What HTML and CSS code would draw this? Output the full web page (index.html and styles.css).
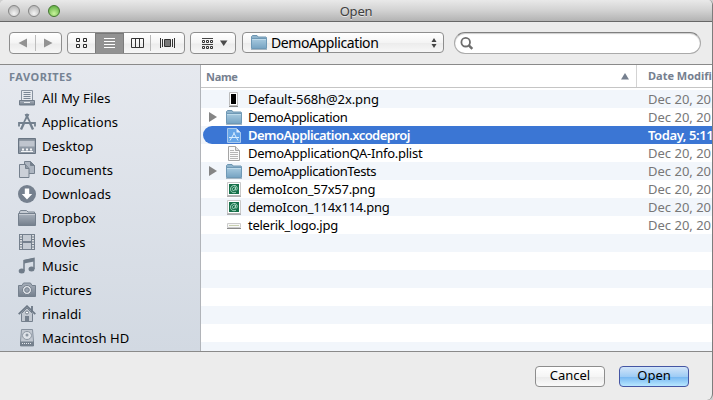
FILE: index.html
```html
<!DOCTYPE html>
<html lang="en">
<head>
<meta charset="utf-8">
<title>Open</title>
<link rel="stylesheet" href="styles.css">
</head>
<body>
<svg width="0" height="0" class="defs">
  <defs>
    <linearGradient id="steel" x1="0" y1="0" x2="0" y2="1"><stop offset="0" stop-color="#a9b1bc"/><stop offset="1" stop-color="#747f8c"/></linearGradient>
    <linearGradient id="blue" x1="0" y1="0" x2="0" y2="1"><stop offset="0" stop-color="#a9cbe0"/><stop offset="1" stop-color="#76a3c2"/></linearGradient>
    <symbol id="folder" viewBox="0 0 16 15">
      <path d="M.5 4V1.500L1.500.500h4.500l1 1.500h8l.5.500V4" fill="#8fb4cc" stroke="#6e96b2"/>
      <path d="M.5 3.500h15v10H.5z" fill="url(#blue)" stroke="#6f99b6"/>
      <path d="M1 4.500h14" stroke="#bedaea"/>
      <path d="M0 14.500h16" stroke="#58778c" opacity=".5"/>
    </symbol>
    <symbol id="demo" viewBox="0 0 14 15">
      <path d="M.5.500h13v13H.5z" fill="#fff" stroke="#c9c9c9"/>
      <path d="M2 2h10v10H2z" fill="#17704a"/>
      <path d="M8.700 5.200C7 4.400 5.200 6 5.300 7.500c.1 1.700 2.500 1.300 3-.5l.4-1.800c-.6 2-.5 3.300.5 3 1.500-.6 1.400-4-1-4.700C5.500 2.900 3.300 5 3.500 7.500c.2 2.600 3 4 5.500 2.700" fill="none" stroke="#b9e3cf" stroke-width=".9"/>
      <path d="M0 14.200h14" stroke="#8c8c8c"/>
    </symbol>
  </defs>
</svg>
<div class="window">
  <header class="titlebar">
    <div class="lights"><i></i><i></i><i class="green"></i></div>
    <h1>Open</h1>
  </header>
  <div class="toolbar">
    <div class="btn nav">
      <svg width="53" height="22" viewBox="0 0 53 22"><path d="M18 6.500v9L9.500 11zM35 6.500v9L43.500 11z" fill="#929292"/><path d="M26.500 3v16" stroke="#bdbdbd"/></svg>
    </div>
    <div class="btn views">
      <svg width="118" height="22" viewBox="0 0 118 22">
        <path d="M28 0h29v22H28z" fill="#929292"/><path d="M28.500 0v22M56.500 0v22" stroke="#7b7b7b"/>
        <path d="M29 1h27" stroke="#787878" stroke-width="2"/>
        <path d="M9.500 6.500h3v3h-3zM16.500 6.500h3v3h-3zM9.500 12.500h3v3h-3zM16.500 12.500h3v3h-3z" fill="none" stroke="#292929"/>
        <path d="M37 6.500h11M37 9.500h11M37 12.500h11M37 15.500h11" stroke="#fff"/>
        <path d="M64.500 6.500h12v9h-12zM68.500 6v10M72.500 6v10" fill="none" stroke="#333"/>
        <path d="M83.500 3v16" stroke="#b8b8b8"/>
        <path d="M93.500 6v10M95.500 7v8M105.500 7v8M107.500 6v10" stroke="#333"/><path d="M97.500 7.500h6v7h-6z" fill="#777" stroke="#333"/>
      </svg>
    </div>
    <div class="btn arrange">
      <svg width="46" height="22" viewBox="0 0 46 22"><path d="M12 6.500h11M12 12.500h11" stroke="#444"/><path d="M12.500 8.500h2v2h-2zM16.500 8.500h2v2h-2zM20.500 8.500h2v2h-2zM12.500 14.500h2v2h-2zM16.500 14.500h2v2h-2zM20.500 14.500h2v2h-2z" fill="none" stroke="#333"/><path d="M30 8.500h7.500L33.700 14z" fill="#4b4b4b"/></svg>
    </div>
    <div class="btn path">
      <svg width="16" height="15"><use href="#folder"/></svg>
      <span>DemoApplication</span>
      <svg class="stepper" width="6" height="10" viewBox="0 0 6 10"><path d="M.5 4L3 0l2.500 4zM.5 6L3 10l2.500-4z" fill="#444"/></svg>
    </div>
    <div class="search"><svg width="14" height="14" viewBox="0 0 14 14"><circle cx="5.700" cy="5.200" r="4.300" fill="none" stroke="#6d6d6d" stroke-width="1.800"/><path d="M8.600 8.200l3.700 3.700" stroke="#6d6d6d" stroke-width="2.400"/></svg></div>
  </div>
  <main class="content">
    <aside class="sidebar">
      <h2>FAVORITES</h2>
      <ul>
        <li><svg viewBox="0 0 18 18"><path d="M3.500 12V1.500h11V12" fill="#e6e9ee" stroke="#8993a0"/><path d="M5.500 3.500h7M5.500 5.500h7M5.500 7.500h7M5.500 9.500h7" stroke="#7a8694"/><path d="M1.500 11.500h15v4.500h-15z" fill="url(#steel)" stroke="#717c89"/><path d="M6 13.500h6" stroke="#e8ebef"/></svg><span>All My Files</span></li>
        <li><svg viewBox="0 0 18 18"><path d="M10.300 1L3 16.500M7.700 1L15 16.500" stroke="#73808e" stroke-width="2.400"/><path d="M1 13.500V10h16v3.500" fill="none" stroke="#73808e" stroke-width="1.800"/><path d="M9 5.500l-2 3.500h4z" fill="#e5e8ed"/></svg><span>Applications</span></li>
        <li><svg viewBox="0 0 18 18"><path d="M.5 1.500h17v15H.5z" fill="#8f99a5" stroke="#697583"/><path d="M1.500 3.500h15v6h-15z" fill="#bfc5ce"/><path d="M1 3h16" stroke="#78838f"/><path d="M3 14.500h12" stroke="#f3f5f7"/><path d="M4 12.500h2M8 12.500h2M12 12.500h2" stroke="#f3f5f7" stroke-width="2"/></svg><span>Desktop</span></li>
        <li><svg viewBox="0 0 18 18"><path d="M6.500.500h6l4 4v8h-10z" fill="#aeb6c1" stroke="#75808d"/><path d="M12.500.500v4h4" fill="#737f8c" stroke="#75808d"/><path d="M1.500 3.500h6l3.500 4v9H1.500z" fill="#cbd0d8" stroke="#75808d"/><path d="M7.500 3.500v4H11" fill="#909aa6" stroke="#75808d"/></svg><span>Documents</span></li>
        <li><svg viewBox="0 0 18 18"><circle cx="9" cy="9" r="9" fill="#75808e"/><path d="M6.800 3.500h4.400V9h3L9 14.500 3.800 9h3z" fill="#fff"/></svg><span>Downloads</span></li>
        <li><svg viewBox="0 0 18 18"><path d="M1.500 5V3l1-1.500h6L10 3h6.500v2" fill="#c5cbd3" stroke="#7a8592"/><path d="M.5 4.500h17v12H.5z" fill="url(#steel)" stroke="#75808d"/><path d="M1 5.500h16" stroke="#c7ccd4"/></svg><span>Dropbox</span></li>
        <li><svg viewBox="0 0 18 18"><path d="M1 1h16v16H1z" fill="#75808d"/><path d="M5 2h8v6H5zM5 10h8v6H5z" fill="#c5cbd3"/><path d="M3 2v15M15 2v15" stroke="#fff" stroke-width="1.500" stroke-dasharray="1.500 1"/></svg><span>Movies</span></li>
        <li><svg viewBox="0 0 18 18"><path d="M6 14V3.500l10-2V12" fill="none" stroke="#707c89" stroke-width="1.500"/><path d="M6 3l10-2v3.500L6 6.500z" fill="#707c89"/><ellipse cx="3.700" cy="14" rx="3" ry="2.500" fill="#707c89"/><ellipse cx="13.500" cy="12" rx="3" ry="2.500" fill="#707c89"/></svg><span>Music</span></li>
        <li><svg viewBox="0 0 18 18"><path d="M.5 4.500H4l1.500-2.500h7L14 4.500h3.500v11H.5z" fill="url(#steel)" stroke="#75808d"/><circle cx="9" cy="9" r="4.500" fill="#e4e7ec" stroke="#75808d"/><circle cx="9" cy="9" r="2.300" fill="#9ba4b0" stroke="#75808d"/></svg><span>Pictures</span></li>
        <li><svg viewBox="0 0 18 18"><path d="M13 1h2v6h-2z" fill="#75808d"/><path d="M3.500 8.500L9 3l5.500 5.500V16.500h-11z" fill="#c3c9d1" stroke="#75808d"/><path d="M.7 9.200L9 1.200l8.300 8" fill="none" stroke="#6c7885" stroke-width="1.800"/><path d="M7 11h4v6H7z" fill="#75808d"/><circle cx="9" cy="7.500" r="1.500" fill="#fff" stroke="#75808d"/></svg><span>rinaldi</span></li>
        <li><svg viewBox="0 0 18 18"><path d="M2.500 12L3.500.500h11l1 11.500v5h-13z" fill="#c1c7d0" stroke="#87919e"/><ellipse cx="9" cy="6.500" rx="4.500" ry="4" fill="#dfe3e9" stroke="#8d97a3"/><circle cx="9" cy="6" r="1.500" fill="#8d97a3"/><path d="M2 12.500h14v4.500H2z" fill="#75808d"/><path d="M4 14.500h10" stroke="#e5e8ed" stroke-dasharray="1 1"/></svg><span>Macintosh HD</span></li>
      </ul>
    </aside>
    <section class="files">
      <div class="head"><b class="name">Name</b><svg width="8" height="7" viewBox="0 0 8 7"><path d="M0 6.500L4 0l4 6.500z" fill="#76808f"/></svg><b class="date">Date Modifi</b></div>
      <div class="rows">
        <div class="row"><i></i><svg viewBox="0 0 16 15"><path d="M3.500.500h8v13h-8z" fill="#fff" stroke="#bbb"/><path d="M5 2h5v10H5z" fill="#000"/><path d="M3 14.500h9" stroke="#888"/></svg><span class="n wide">Default-568h@2x.png</span><span class="d">Dec 20, 20</span></div>
        <div class="row"><i class="tri"></i><svg><use href="#folder"/></svg><span class="n tight">DemoApplication</span><span class="d">Dec 20, 20</span></div>
        <div class="row selected"><i></i><svg viewBox="0 0 16 15"><path d="M1.500.500h9l4 4v10h-13z" fill="#66a5e8" stroke="#a9c9ed"/><path d="M10.500.500v4h4z" fill="#e3f0ff"/><path d="M8.500 4.500l-4.500 8M7.500 4.500l4.500 8M3 9.500h10" stroke="#d9edff" stroke-width="1"/></svg><span class="n">DemoApplication.xcodeproj</span><span class="d">Today, 5:11</span></div>
        <div class="row"><i></i><svg viewBox="0 0 16 15"><path d="M2.500.500h7l4 4v10h-11z" fill="#fafafa" stroke="#a5a5a5"/><path d="M9.500.500v4h4" fill="#ddd" stroke="#a5a5a5"/><path d="M4 4.500h4M4 6.500h8M4 8.500h8M4 10.500h8M4 12.500h8" stroke="#b5b5b5"/></svg><span class="n">DemoApplicationQA-Info.plist</span><span class="d">Dec 20, 20</span></div>
        <div class="row"><i class="tri"></i><svg><use href="#folder"/></svg><span class="n tight">DemoApplicationTests</span><span class="d">Dec 20, 20</span></div>
        <div class="row"><i></i><svg><use href="#demo"/></svg><span class="n">demoIcon_57x57.png</span><span class="d">Dec 20, 20</span></div>
        <div class="row"><i></i><svg><use href="#demo"/></svg><span class="n">demoIcon_114x114.png</span><span class="d">Dec 20, 20</span></div>
        <div class="row"><i></i><svg viewBox="0 0 16 15"><path d="M1.500 5.500h13v4h-13z" fill="#f8f8f8" stroke="#ccc"/><path d="M3 7.500h10" stroke="#c8cfb0"/><path d="M1 10.500h14" stroke="#8a8a8a"/></svg><span class="n">telerik_logo.jpg</span><span class="d">Dec 20, 20</span></div>
      </div>
    </section>
  </main>
  <footer class="footer"><button>Cancel</button><button class="primary">Open</button></footer>
</div>
</body>
</html>
```
FILE: styles.css
```css
* { box-sizing: border-box; }
body { margin: 0; background: #cfcfcf; font: 13px "Noto Sans", sans-serif; color: #000; }
.defs { position: absolute; }
svg { display: block; flex: none; }
.window { width: 713px; height: 400px; display: flex; flex-direction: column; background: #ececec; border-right: 1px solid #7d7d7d; border-radius: 5px 5px 6px 0; overflow: hidden; }
.titlebar { height: 22px; flex: none; display: flex; align-items: center; background: linear-gradient(#e9e9e9, #d2d2d2 50%, #b3b3b3); border-bottom: 1px solid #686868; }
.lights { width: 68px; padding-left: 8px; display: flex; gap: 8px; }
.lights i { width: 12px; height: 12px; border-radius: 50%; border: 1px solid #858585; background: radial-gradient(circle at 50% 75%, #f5f5f5, #bcbcbc 75%); }
.lights .green { border-color: #42762e; background: radial-gradient(circle at 50% 75%, #c9f49c, #6db84d 75%); }
h1 { margin: 0 68px 0 0; flex: 1; text-align: center; font-size: 13px; font-weight: 400; line-height: 20px; letter-spacing: -.2px; color: #404040; text-shadow: 0 1px #e5e5e5; }
.toolbar { height: 43px; flex: none; display: flex; align-items: flex-start; padding: 10px 11px 0 9px; border-bottom: 1px solid #8a8a8a; }
.btn { height: 22px; border: 1px solid #8e8e8e; border-radius: 4px; background: linear-gradient(#fff, #f4f4f4 50%, #ececec 55%, #f7f7f7); overflow: hidden; }
.nav { width: 53px; margin-right: 5px; }
.views { width: 118px; margin-right: 5px; }
.arrange { width: 46px; margin-right: 6px; }
.btn.nav > svg, .btn.views > svg, .btn.arrange > svg { margin: -1px 0 0 -1px; }
.path { width: 202px; height: 21px; display: flex; align-items: center; padding: 0 6px 0 8px; margin-right: 10px; }
.path span { flex: 1; margin-left: 4px; font-size: 14px; line-height: 19px; letter-spacing: -.4px; }
.search { flex: 1; height: 22px; border: 1px solid #aaa; border-top-color: #7f7f7f; border-radius: 11px; background: #fff; box-shadow: inset 0 1px 1px #ccc; padding: 4px 5px; }
.content { flex: none; height: 286px; display: flex; }
.sidebar { width: 201px; flex: none; background: linear-gradient(#e6e9ef, #d2d9e2); border-right: 1px solid #b1b4b9; }
h2 { margin: 0; padding: 4px 0 0 9px; height: 21px; font-size: 11px; line-height: 16px; letter-spacing: .5px; color: #768394; }
ul { margin: 0; padding: 0; list-style: none; }
li { height: 24px; display: flex; align-items: center; padding-left: 18px; letter-spacing: .12px; }
li svg { width: 18px; height: 18px; margin-right: 6px; }
.files { flex: 1; min-width: 0; background: #fff; }
.head { height: 23px; display: flex; align-items: center; border-bottom: 1px solid #c5c5c5; font-size: 11px; color: #76808f; }
.head .name { width: 420px; flex: none; padding-left: 5px; letter-spacing: -.3px; }
.head .date { width: 75px; height: 22px; line-height: 22px; margin-left: 7px; border-left: 1px solid #d3d3d3; padding-left: 11px; white-space: nowrap; flex: none; }
.rows { margin-top: 2px; height: 261px; background: repeating-linear-gradient(#f2f6fb 0 18px, #fff 18px 36px); }
.row { height: 18px; display: flex; align-items: center; line-height: 18px; white-space: nowrap; }
.row i { width: 9px; height: 10px; margin: 0 8px 0 8px; flex: none; }
.row .tri { background: #858585; clip-path: polygon(0 0, 8px 50%, 0 100%); }
.row svg { width: 16px; height: 15px; }
.n { width: 406px; flex: none; padding-left: 6px; letter-spacing: -.26px; }
.n.tight { letter-spacing: -.4px; }
.n.wide { letter-spacing: -.1px; }
.d { color: #777; flex: none; }
.selected { margin-left: 2px; border-radius: 9px 0 0 9px; background: #3b76d4; color: #fff; font-weight: 600; }
.selected i { margin-left: 6px; }
.selected .n { letter-spacing: -.55px; }
.selected .d { color: #fff; letter-spacing: -.4px; }
.footer { flex: 1; border-top: 1px solid #8a8a8a; display: flex; gap: 14px; justify-content: flex-end; padding: 14px 23px 0 0; }
button { width: 70px; height: 21px; padding: 0 0 2px; border: 1px solid #8d8d8d; border-radius: 4px; background: linear-gradient(#fff, #f5f5f5 50%, #ebebeb 52%, #fafafa); font: 13px/17px "Noto Sans", sans-serif; color: #000; }
.primary { border-color: #4556a4; background: linear-gradient(#d2e5f9, #9fccf5 50%, #75b6f1 52%, #b9e8ff); }
```
